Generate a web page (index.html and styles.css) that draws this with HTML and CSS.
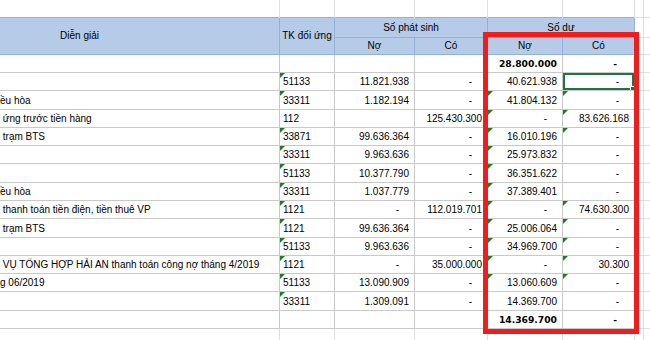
FILE: index.html
```html
<!DOCTYPE html>
<html lang="vi">
  <head>
    <meta charset="utf-8">
    <title>Sổ chi tiết công nợ</title>
    <link rel="stylesheet" href="styles.css">
  </head>
  <body>
    <div class="sheet">
      <table class="grid">
        <colgroup>
          <col class="c-desc">
          <col class="c-tk">
          <col class="c-ps-no">
          <col class="c-ps-co">
          <col class="c-sd-no">
          <col class="c-sd-co">
          <col class="c-x1">
          <col class="c-x2">
        </colgroup>
        <tr class="blank">
          <td></td><td></td><td></td><td></td><td></td><td></td><td></td><td></td>
        </tr>
        <tr class="head1">
          <th rowspan="2">Diễn giải</th>
          <th rowspan="2">TK đối ứng</th>
          <th colspan="2">Số phát sinh</th>
          <th colspan="2">Số dư</th>
          <td class="x"></td><td class="x"></td>
        </tr>
        <tr class="head2">
          <th>Nợ</th><th>Có</th><th>Nợ</th><th>Có</th>
          <td class="x"></td><td class="x"></td>
        </tr>
        <tr>
          <td class="desc">Số dư đầu kỳ</td><td class="tk"></td><td class="num"></td><td class="num"></td>
          <td class="num total">28.800.000</td><td class="num total z">-</td>
          <td class="x"></td><td class="x"></td>
        </tr>
        <tr>
          <td class="desc">Doanh thu điều hòa</td><td class="tk tri">51133</td><td class="num">11.821.938</td><td class="num z">-</td>
          <td class="num">40.621.938</td><td class="num z sel">-</td>
          <td class="x"></td><td class="x"></td>
        </tr>
        <tr>
          <td class="desc"><span class="lead">Thuế GTGT tiền thuê đi</span>ều hòa</td><td class="tk tri">33311</td><td class="num">1.182.194</td><td class="num z">-</td>
          <td class="num tri">41.804.132</td><td class="num z tri">-</td>
          <td class="x"></td><td class="x"></td>
        </tr>
        <tr>
          <td class="desc"><span class="lead">Khách hàng Minh Phát</span> ứng trước tiền hàng</td><td class="tk">112</td><td class="num"></td><td class="num">125.430.300</td>
          <td class="num z tri">-</td><td class="num tri">83.626.168</td>
          <td class="x"></td><td class="x"></td>
        </tr>
        <tr>
          <td class="desc"><span class="lead">Cho thuê vị trí đặt</span> trạm BTS</td><td class="tk tri">33871</td><td class="num">99.636.364</td><td class="num z">-</td>
          <td class="num tri">16.010.196</td><td class="num z tri">-</td>
          <td class="x"></td><td class="x"></td>
        </tr>
        <tr>
          <td class="desc">Thuế GTGT trạm BTS</td><td class="tk tri">33311</td><td class="num">9.963.636</td><td class="num z">-</td>
          <td class="num tri">25.973.832</td><td class="num z">-</td>
          <td class="x"></td><td class="x"></td>
        </tr>
        <tr>
          <td class="desc">Doanh thu điều hòa</td><td class="tk tri">51133</td><td class="num">10.377.790</td><td class="num z">-</td>
          <td class="num tri">36.351.622</td><td class="num z">-</td>
          <td class="x"></td><td class="x"></td>
        </tr>
        <tr>
          <td class="desc"><span class="lead">Thuế GTGT tiền thuê đi</span>ều hòa</td><td class="tk tri">33311</td><td class="num">1.037.779</td><td class="num z">-</td>
          <td class="num tri">37.389.401</td><td class="num z">-</td>
          <td class="x"></td><td class="x"></td>
        </tr>
        <tr>
          <td class="desc"><span class="lead">Công ty Đông Nam</span> thanh toán tiền điện, tiền thuê VP</td><td class="tk tri">1121</td><td class="num z">-</td><td class="num">112.019.701</td>
          <td class="num z tri">-</td><td class="num tri">74.630.300</td>
          <td class="x"></td><td class="x"></td>
        </tr>
        <tr>
          <td class="desc"><span class="lead">Thu tiền thuê vị trí đặt</span> trạm BTS</td><td class="tk tri">1121</td><td class="num">99.636.364</td><td class="num z">-</td>
          <td class="num tri">25.006.064</td><td class="num z tri">-</td>
          <td class="x"></td><td class="x"></td>
        </tr>
        <tr>
          <td class="desc">Doanh thu tháng 05/2019</td><td class="tk tri">51133</td><td class="num">9.963.636</td><td class="num z">-</td>
          <td class="num tri">34.969.700</td><td class="num z tri">-</td>
          <td class="x"></td><td class="x"></td>
        </tr>
        <tr>
          <td class="desc"><span class="lead">Công ty TNHH DỊCH</span> VỤ TỔNG HỢP HẢI AN thanh toán công nợ tháng 4/2019</td><td class="tk tri">1121</td><td class="num z">-</td><td class="num">35.000.000</td>
          <td class="num z tri">-</td><td class="num tri">30.300</td>
          <td class="x"></td><td class="x"></td>
        </tr>
        <tr>
          <td class="desc"><span class="lead">Doanh thu cho thuê thán</span>g 06/2019</td><td class="tk tri">51133</td><td class="num">13.090.909</td><td class="num z">-</td>
          <td class="num tri">13.060.609</td><td class="num z tri">-</td>
          <td class="x"></td><td class="x"></td>
        </tr>
        <tr>
          <td class="desc">Thuế GTGT T06/2019</td><td class="tk tri">33311</td><td class="num">1.309.091</td><td class="num z">-</td>
          <td class="num">14.369.700</td><td class="num z">-</td>
          <td class="x"></td><td class="x"></td>
        </tr>
        <tr>
          <td class="desc">Số dư cuối kỳ</td><td class="tk"></td><td class="num"></td><td class="num"></td>
          <td class="num total">14.369.700</td><td class="num total z">-</td>
          <td class="x"></td><td class="x"></td>
        </tr>
        <tr class="blank tail">
          <td></td><td></td><td></td><td></td><td></td><td></td><td></td><td></td>
        </tr>
      </table>
      <div class="mark"></div>
    </div>
  </body>
</html>
```

FILE: styles.css
```css
body {
margin: 0;
background: #fff;
color: #000;
font-family: "Liberation Sans", Arial, sans-serif;
font-size: 10px;
}

.sheet {
position: relative;
width: 650px;
height: 340px;
overflow: hidden;
}

.grid {
border-collapse: collapse;
table-layout: fixed;
width: 864px;
margin-left: -121px;
}

.c-desc { width: 400px; }
.c-tk { width: 55px; }
.c-ps-no { width: 80px; }
.c-ps-co { width: 73px; }
.c-sd-no { width: 75px; }
.c-sd-co { width: 72px; }
.c-x1 { width: 9px; }
.c-x2 { width: 100px; }

/* data cells: 15.29 + 2 padding + 1 border = 18.29 row pitch */
td {
height: 15.29px;
padding: 0 5px 2px 3px;
border: 1px solid #c9c9c9;
line-height: 12px;
vertical-align: bottom;
white-space: nowrap;
overflow: hidden;
}

.blank td {
height: 16.5px;
padding: 0;
border-color: #dedede;
border-top: none;
border-bottom: none;
}

.tail td {
height: 12px;
}

td.x {
border-color: #dedede;
}

th {
background: #b6cbe7;
border: 1px solid #93b1d9;
font-weight: normal;
padding: 0;
text-align: center;
vertical-align: middle;
white-space: nowrap;
}

.head1 th, .head1 td { height: 19px; padding: 0; }
.head2 th, .head2 td { height: 16.3px; padding: 0; }

.desc {
padding-left: 0;
}

/* the sheet is scrolled: the start of each description lies left of the view */
.lead {
display: inline-block;
width: 120px;
overflow: hidden;
text-align: right;
vertical-align: bottom;
}

.num {
text-align: right;
}

.num.z {
padding-right: 15px;
}

.total {
font-family: "DejaVu Sans", sans-serif;
font-weight: bold;
font-size: 9.2px;
}

.total.z {
padding-right: 17px;
}

.tri {
position: relative;
}

.tri::before {
content: "";
position: absolute;
top: 0;
left: 0;
border-top: 5px solid #1f7d2a;
border-right: 5px solid transparent;
}

.sel {
position: relative;
box-shadow: inset 0 0 0 2px #217346;
}

.sel::after {
content: "";
position: absolute;
right: -2px;
bottom: -2px;
width: 4px;
height: 4px;
background: #217346;
border: 1px solid #fff;
}

.mark {
position: absolute;
left: 483px;
top: 32px;
width: 156px;
height: 302px;
box-sizing: border-box;
border: 5px solid #f01d1d;
}
```
